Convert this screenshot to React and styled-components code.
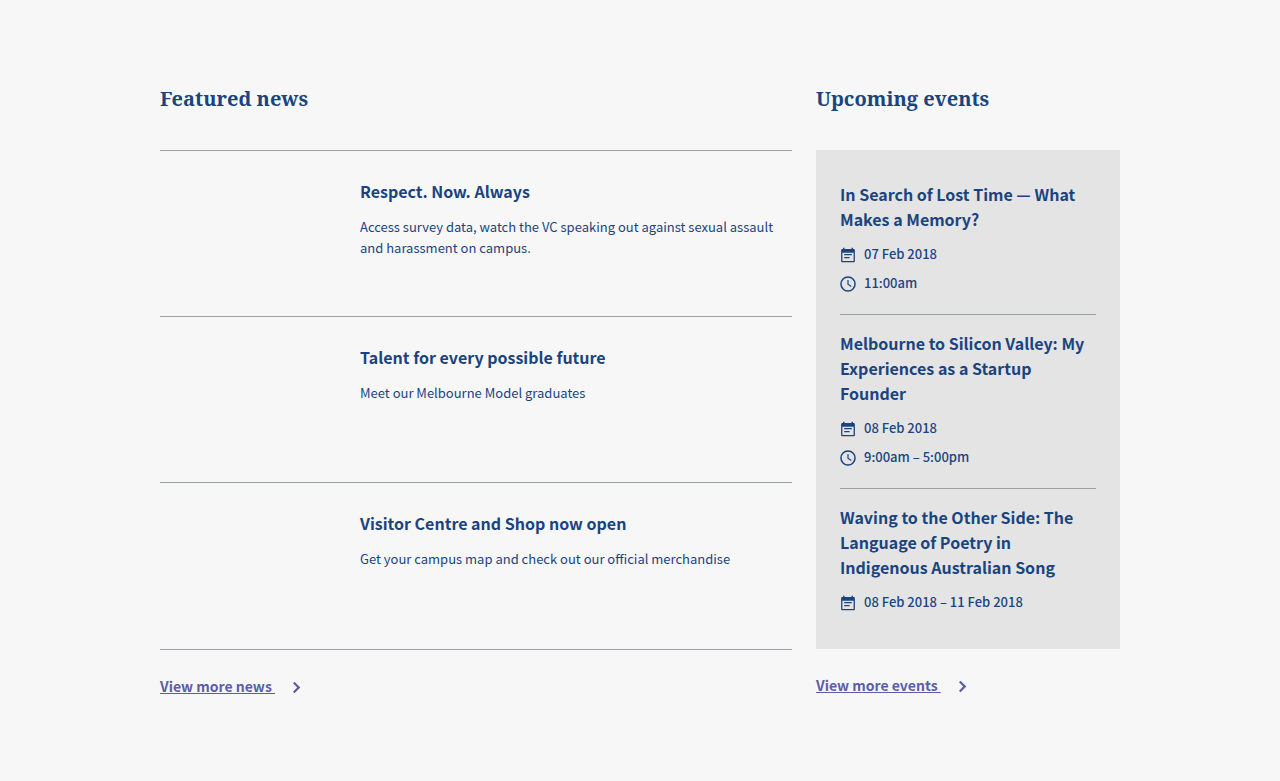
import React from "react";
import styled, { createGlobalStyle } from "styled-components";

const GlobalStyle = createGlobalStyle`
  *, *::before, *::after { box-sizing: border-box; }
  body {
    margin: 0;
    background: #f7f7f7;
    color: #1a4480;
    font-family: "Source Sans Pro", "Noto Sans CJK SC", "Open Sans", sans-serif;
    font-size: 13px;
    line-height: 21px;
  }
`;

const Page = styled.main`
  display: grid;
  grid-template-columns: minmax(0, 1fr) 304px;
  column-gap: 24px;
  max-width: 1008px;
  margin: 0 auto;
  padding: 80px 24px;

  @media (max-width: 760px) {
    grid-template-columns: minmax(0, 1fr);
    row-gap: 48px;
  }
`;

const Column = styled.section`
  display: flex;
  flex-direction: column;
`;

const SectionTitle = styled.h2`
  margin: 0 0 32px;
  font-family: "Noto Serif", "DejaVu Serif", serif;
  font-size: 20px;
  font-weight: 700;
  line-height: 38px;
`;

const NewsList = styled.ul`
  margin: 0;
  padding: 0 0 1px;
  list-style: none;
  border-bottom: 1px solid #9aa1ad;
`;

const NewsItem = styled.li`
  display: grid;
  grid-template-columns: 176px minmax(0, 1fr);
  column-gap: 24px;
  min-height: 166px;
  padding: 28px 0 24px;
  border-top: 1px solid #9aa1ad;
`;

const NewsBody = styled.div`
  grid-column: 2;
`;

const ItemTitle = styled.h3`
  margin: 0 0 12px;
  font-size: 16px;
  font-weight: 700;
  line-height: 25px;
`;

const Summary = styled.p`
  margin: 0;
`;

const EventPanel = styled.ul`
  margin: 0;
  padding: 16px 24px;
  list-style: none;
  background: #e4e4e4;
`;

const EventItem = styled.li`
  padding: 16px 0 20px;

  & + & {
    border-top: 1px solid #9aa1ad;
  }
`;

const Details = styled.div`
  display: flex;
  flex-direction: column;
  gap: 8px;
  font-weight: 500;
  line-height: 19px;
`;

const Detail = styled.div`
  display: flex;
  align-items: flex-start;
  gap: 8px;
  min-height: 21px;
`;

const Icon = styled.svg`
  flex: none;
  width: 16px;
  height: 16px;
  fill: currentColor;
`;

const DetailIcon = styled(Icon)`
  margin-top: 3px;
`;

const MoreLink = styled.a`
  display: flex;
  align-items: center;
  align-self: flex-start;
  gap: 13px;
  margin-top: 24px;
  color: #5b5ea6;
  font-size: 14px;
  font-weight: 700;
  line-height: 24px;
  text-decoration: none;
`;

const LinkText = styled.span`
  white-space: pre;
  text-decoration: underline;
`;

const CalendarIcon = () => (
  <DetailIcon viewBox="0 0 16 16" aria-hidden="true">
    <path
      fillRule="evenodd"
      d="M3 .8h1.500V2h7V.8H13V2h.6c.8 0 1.300.6 1.300 1.300v10.700c0 .7-.5 1.300-1.300 1.300H2.400c-.8 0-1.300-.6-1.300-1.300V3.300C1.100 2.600 1.600 2 2.400 2H3zM2.400 5.800v8.200h11.200V5.800zM4.200 7h7.600v1.300H4.200zM4.200 10h5.400v1.300H4.200z"
    />
  </DetailIcon>
);

const ClockIcon = () => (
  <DetailIcon viewBox="0 0 16 16" aria-hidden="true">
    <path
      fillRule="evenodd"
      d="M8 .2a7.800 7.800 0 1 1 0 15.600A7.800 7.800 0 0 1 8 .2zm0 1.500a6.300 6.300 0 1 0 0 12.600A6.300 6.300 0 0 0 8 1.700zM7.400 4h1.200v4l3 1.900-.6 1-3.600-2.300z"
    />
  </DetailIcon>
);

const ChevronIcon = () => (
  <Icon viewBox="0 0 16 16" aria-hidden="true">
    <path d="M5 5.300 6.500 3.800 12.300 9.500l-5.800 5.700L5 13.700l4.200-4.200z" />
  </Icon>
);

const news = [
  {
    title: "Respect. Now. Always",
    summary:
      "Access survey data, watch the VC speaking out against sexual assault and harassment on campus.",
  },
  {
    title: "Talent for every possible future",
    summary: "Meet our Melbourne Model graduates",
  },
  {
    title: "Visitor Centre and Shop now open",
    summary: "Get your campus map and check out our official merchandise",
  },
];

const events = [
  {
    title: "In Search of Lost Time — What Makes a Memory?",
    date: "07 Feb 2018",
    time: "11:00am",
  },
  {
    title: "Melbourne to Silicon Valley: My Experiences as a Startup Founder",
    date: "08 Feb 2018",
    time: "9:00am – 5:00pm",
  },
  {
    title:
      "Waving to the Other Side: The Language of Poetry in Indigenous Australian Song",
    date: "08 Feb 2018 – 11 Feb 2018",
  },
];

export default function App() {
  return (
    <>
      <GlobalStyle />
      <Page>
        <Column>
          <SectionTitle>Featured news</SectionTitle>
          <NewsList>
            {news.map((item) => (
              <NewsItem key={item.title}>
                <NewsBody>
                  <ItemTitle>{item.title}</ItemTitle>
                  <Summary>{item.summary}</Summary>
                </NewsBody>
              </NewsItem>
            ))}
          </NewsList>
          <MoreLink href="#news">
            <LinkText>{"View more news "}</LinkText>
            <ChevronIcon />
          </MoreLink>
        </Column>
        <Column>
          <SectionTitle>Upcoming events</SectionTitle>
          <EventPanel>
            {events.map((event) => (
              <EventItem key={event.title}>
                <ItemTitle>{event.title}</ItemTitle>
                <Details>
                  <Detail>
                    <CalendarIcon />
                    {event.date}
                  </Detail>
                  {event.time && (
                    <Detail>
                      <ClockIcon />
                      {event.time}
                    </Detail>
                  )}
                </Details>
              </EventItem>
            ))}
          </EventPanel>
          <MoreLink href="#events">
            <LinkText>{"View more events "}</LinkText>
            <ChevronIcon />
          </MoreLink>
        </Column>
      </Page>
    </>
  );
}
